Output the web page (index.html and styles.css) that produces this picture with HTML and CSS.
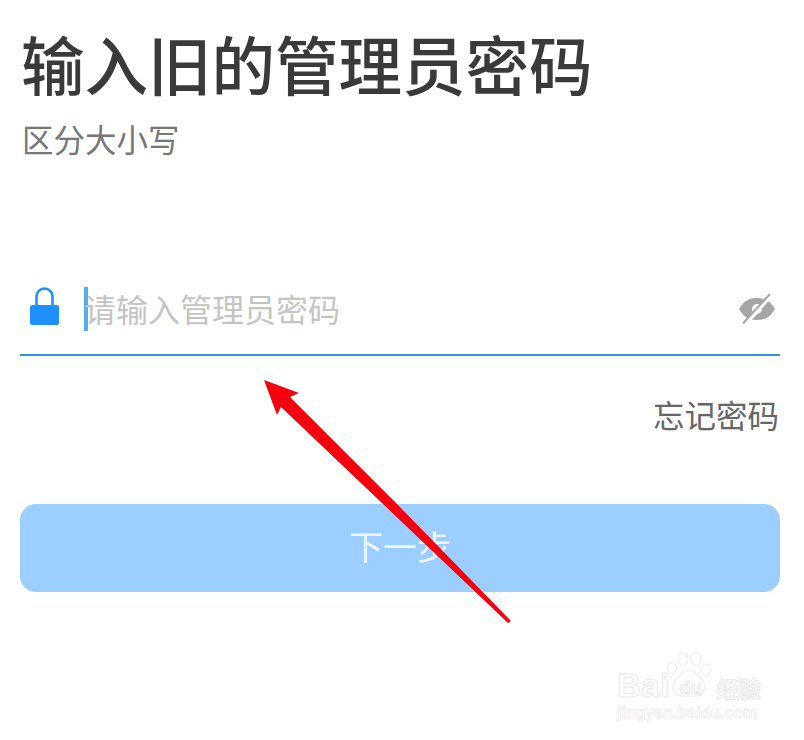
FILE: index.html
```html
<!DOCTYPE html>
<html lang="zh-CN">
<head>
    <meta charset="UTF-8">
    <meta name="viewport" content="width=device-width, initial-scale=1.0">
    <title>输入旧的管理员密码</title>
    <link rel="stylesheet" href="styles.css">
</head>
<body>
    <div class="page">
        <h1 class="title">输入旧的管理员密码</h1>
        <p class="subtitle">区分大小写</p>

        <div class="field">
            <svg class="lock" width="30" height="40" viewBox="0 0 30 40">
                <path d="M6.500 20V9.500a8 8 0 0 1 16 0V20" fill="none" stroke="#1e90ff" stroke-width="2.600"/>
                <rect x="0" y="18" width="29" height="20" rx="2.500" fill="#1e90ff"/>
            </svg>
            <span class="caret"></span>
            <span class="placeholder">请输入管理员密码</span>
            <svg class="eye" width="38" height="32" viewBox="0 0 38 32">
                <path d="M1 16C6 7 12 5 19 5s13 2 18 11c-5 9-11 11-18 11S6 25 1 16z" fill="#a6a6a6"/>
                <circle cx="19" cy="16" r="5" fill="#fff"/>
                <path d="M7 31L33 2" stroke="#fff" stroke-width="4.500"/>
                <path d="M5 30.500L32 1" stroke="#a6a6a6" stroke-width="2"/>
            </svg>
        </div>

        <div class="forgot-row">
            <span class="forgot">忘记密码</span>
        </div>

        <button class="next" type="button">下一步</button>
    </div>

    <!-- annotation drawn over the screenshot -->
    <svg class="arrow" width="804" height="740" viewBox="0 0 804 740">
        <path d="M264 380L299 393L290 397L397 504L511 621L508 623L383 504L281 407L277 415Z" fill="#f5000f"/>
    </svg>

    <div class="watermark">
        <svg class="paw" width="46" height="46" viewBox="0 0 46 46">
            <g fill="#fff" stroke="#ececec" stroke-width="1.200">
                <ellipse cx="5" cy="16" rx="4.500" ry="6"/>
                <ellipse cx="16" cy="7" rx="5" ry="6.500"/>
                <ellipse cx="29" cy="7" rx="5" ry="6.500"/>
                <ellipse cx="39" cy="18" rx="4.500" ry="6"/>
                <path d="M22 18c6 0 9 5 14 11 4 7 0 15-7 15H15C8 44 3 36 8 29c5-6 8-11 14-11z"/>
            </g>
        </svg>
        <div class="wm-top">
            <span class="wm-bai">Bai</span>
            <span class="wm-du">du</span>
            <span class="wm-cn">经验</span>
        </div>
        <div class="wm-url">jingyan.baidu.com</div>
    </div>
</body>
</html>
```

FILE: styles.css
```css
body {
    margin: 0;
    background: #fff;
    font-family: "Noto Sans CJK SC", "Noto Sans", sans-serif;
    overflow: hidden;
}
.page {
    width: 804px;
    height: 740px;
    padding: 16px 24px 0 20px;
    box-sizing: border-box;
}
.title {
    margin: 0 0 0 1px;
    font-size: 63.5px;
    line-height: 92px;
    font-weight: 500;
    color: #3a3a3a;
}
.subtitle {
    margin: 7px 0 0 2px;
    font-size: 31.5px;
    line-height: 46px;
    color: #777;
}
.field {
    display: flex;
    align-items: center;
    height: 78px;
    margin-top: 109px;
    padding-bottom: 6px;
    border-bottom: 2px solid #2f95e8;
}
.lock {
    margin-left: 10px;
    margin-bottom: 4px;
    flex: none;
}
.caret {
    width: 4px;
    height: 44px;
    margin-left: 24px;
    background: #55aef0;
    flex: none;
}
.placeholder {
    margin-left: -4px;
    padding-bottom: 2px;
    font-size: 32px;
    color: #c4c4c4;
    flex: 1;
}
.eye {
    margin-right: 4px;
    flex: none;
}
.forgot-row {
    display: flex;
    justify-content: flex-end;
    margin-top: 35px;
}
.forgot {
    font-size: 31.5px;
    line-height: 46px;
    color: #666;
    margin-right: 1px;
    padding-bottom: 2px;
    margin-bottom: -2px;
}
.next {
    display: block;
    width: 760px;
    height: 88px;
    margin-top: 67px;
    border: none;
    border-radius: 16px;
    background: #9ccfff;
    color: #eef7ff;
    font-family: inherit;
    font-size: 34px;
    padding: 0 0 5px;
}
.arrow {
    position: absolute;
    left: 0;
    top: 0;
}
.watermark {
    position: absolute;
    left: 617px;
    top: 652px;
    width: 150px;
    height: 72px;
    font-family: "Liberation Sans", sans-serif;
    color: #fff;
}
.paw {
    position: absolute;
    left: 50px;
    top: 0;
}
.wm-top {
    position: absolute;
    left: 0;
    top: 20px;
    height: 28px;
    display: flex;
    align-items: flex-end;
    line-height: 28px;
    -webkit-text-stroke: 1px #e8e8e8;
}
.wm-bai {
    font-size: 33px;
    font-weight: 700;
    letter-spacing: 0.5px;
}
.wm-du {
    margin-left: 10px;
    font-size: 18px;
    line-height: 24px;
    font-weight: 700;
    position: relative;
    z-index: 1;
}
.wm-cn {
    margin-left: 15px;
    font-family: "Noto Sans CJK SC", sans-serif;
    font-size: 22px;
    line-height: 26px;
    font-weight: 700;
}
.wm-url {
    position: absolute;
    left: 0;
    top: 52px;
    font-size: 16px;
    line-height: 18px;
    font-weight: 700;
    white-space: nowrap;
    -webkit-text-stroke: 1px #efefef;
}
```
